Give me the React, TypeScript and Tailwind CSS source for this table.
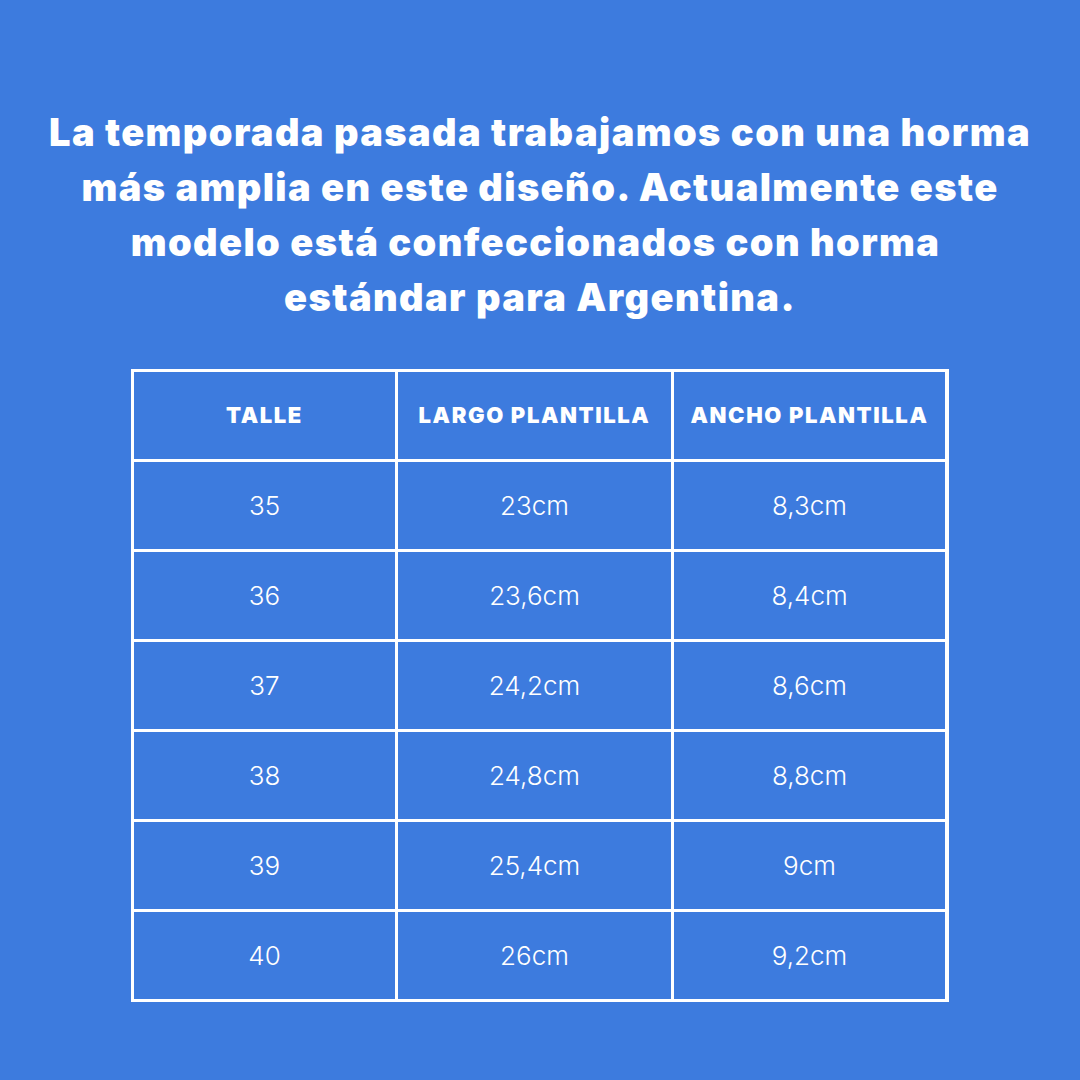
const rows = [
  { talle: "35", largo: "23cm", ancho: "8,3cm" },
  { talle: "36", largo: "23,6cm", ancho: "8,4cm" },
  { talle: "37", largo: "24,2cm", ancho: "8,6cm" },
  { talle: "38", largo: "24,8cm", ancho: "8,8cm" },
  { talle: "39", largo: "25,4cm", ancho: "9cm" },
  { talle: "40", largo: "26cm", ancho: "9,2cm" },
];

export default function App() {
  return (
    <div className="flex h-[1080px] w-[1080px] flex-col items-center bg-[#3d7bde] pt-[105px] text-white">
      <h1 className="text-center font-['Inter',sans-serif] text-[38px] font-black leading-[55px] tracking-[1.4px]">
        La temporada pasada trabajamos con una horma
        <br />
        más amplia en este diseño. Actualmente este
        <br />
        modelo está confeccionados con horma&nbsp;
        <br />
        estándar para Argentina.
      </h1>

      <div className="mt-[44px] grid w-[818px] grid-cols-[261px_273px_271px] gap-[3px] bg-white p-[3px] font-['Inter',sans-serif]">
        {["TALLE", "LARGO PLANTILLA", "ANCHO PLANTILLA"].map((h) => (
          <div
            key={h}
            className="flex h-[87px] items-center justify-center bg-[#3d7bde] text-[22px] font-black tracking-[1.6px]"
          >
            {h}
          </div>
        ))}
        {rows.map((r) =>
          [r.talle, r.largo, r.ancho].map((v, i) => (
            <div
              key={r.talle + i}
              className="flex h-[87px] items-center justify-center bg-[#3d7bde] text-[26px] font-light"
            >
              {v}
            </div>
          ))
        )}
      </div>
    </div>
  );
}
